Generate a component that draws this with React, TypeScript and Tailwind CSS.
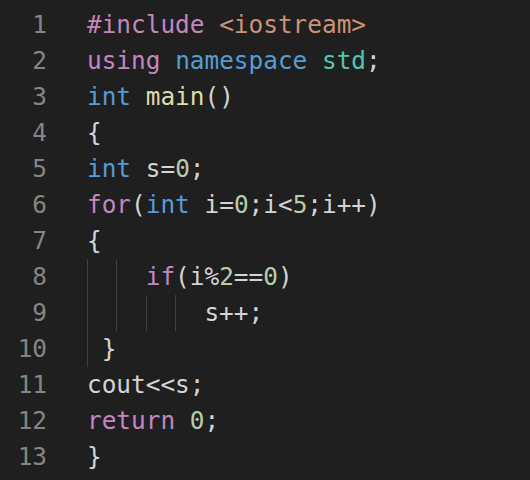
type Tok = [string, string];

const C = {
  kw: "text-[#c586c0]",
  type: "text-[#569cd6]",
  ns: "text-[#4ec9b0]",
  fn: "text-[#dcdcaa]",
  str: "text-[#ce9178]",
  num: "text-[#b5cea8]",
  txt: "text-[#d4d4d4]",
};

// guides: list of widths (in ch) for the leading indent blocks, each with a guide on its left
const lines: { guides: number[]; toks: Tok[] }[] = [
  { guides: [], toks: [["#include", C.kw], [" ", C.txt], ["<iostream>", C.str]] },
  { guides: [], toks: [["using", C.kw], [" ", C.txt], ["namespace", C.type], [" ", C.txt], ["std", C.ns], [";", C.txt]] },
  { guides: [], toks: [["int", C.type], [" ", C.txt], ["main", C.fn], ["()", C.txt]] },
  { guides: [], toks: [["{", C.txt]] },
  { guides: [], toks: [["int", C.type], [" s=", C.txt], ["0", C.num], [";", C.txt]] },
  {
    guides: [],
    toks: [["for", C.kw], ["(", C.txt], ["int", C.type], [" i=", C.txt], ["0", C.num], [";i<", C.txt], ["5", C.num], [";i++)", C.txt]],
  },
  { guides: [], toks: [["{", C.txt]] },
  { guides: [2, 2], toks: [["if", C.kw], ["(i%", C.txt], ["2", C.num], ["==", C.txt], ["0", C.num], [")", C.txt]] },
  { guides: [2, 2, 2, 2], toks: [["s++;", C.txt]] },
  { guides: [1], toks: [["}", C.txt]] },
  { guides: [], toks: [["cout<<s;", C.txt]] },
  { guides: [], toks: [["return", C.kw], [" ", C.txt], ["0", C.num], [";", C.txt]] },
  { guides: [], toks: [["}", C.txt]] },
];

function Guide({ w }: { w: number }) {
  return (
    <span
      className={
        (w === 1 ? "w-[1ch] " : "w-[2ch] ") + "h-full shrink-0 border-l border-[#404040]"
      }
    />
  );
}

export default function App() {
  return (
    <div
      className="w-[530px] h-[480px] overflow-hidden bg-[#1f1f1f] pt-[7px] text-[24.4px] leading-[36px]"
      style={{ fontFamily: '"DejaVu Sans Mono", "Liberation Mono", monospace' }}
    >
      {lines.map((line, i) => (
        <div key={i} className="flex h-9">
          <div className="w-[47px] shrink-0 text-right text-[#858585]">{i + 1}</div>
          <div className="ml-[40px] flex h-full">
            {line.guides.map((w, j) => (
              <Guide key={j} w={w} />
            ))}
            <span className="whitespace-pre">
              {line.toks.map(([t, c], k) => (
                <span key={k} className={c}>
                  {t}
                </span>
              ))}
            </span>
          </div>
        </div>
      ))}
    </div>
  );
}
